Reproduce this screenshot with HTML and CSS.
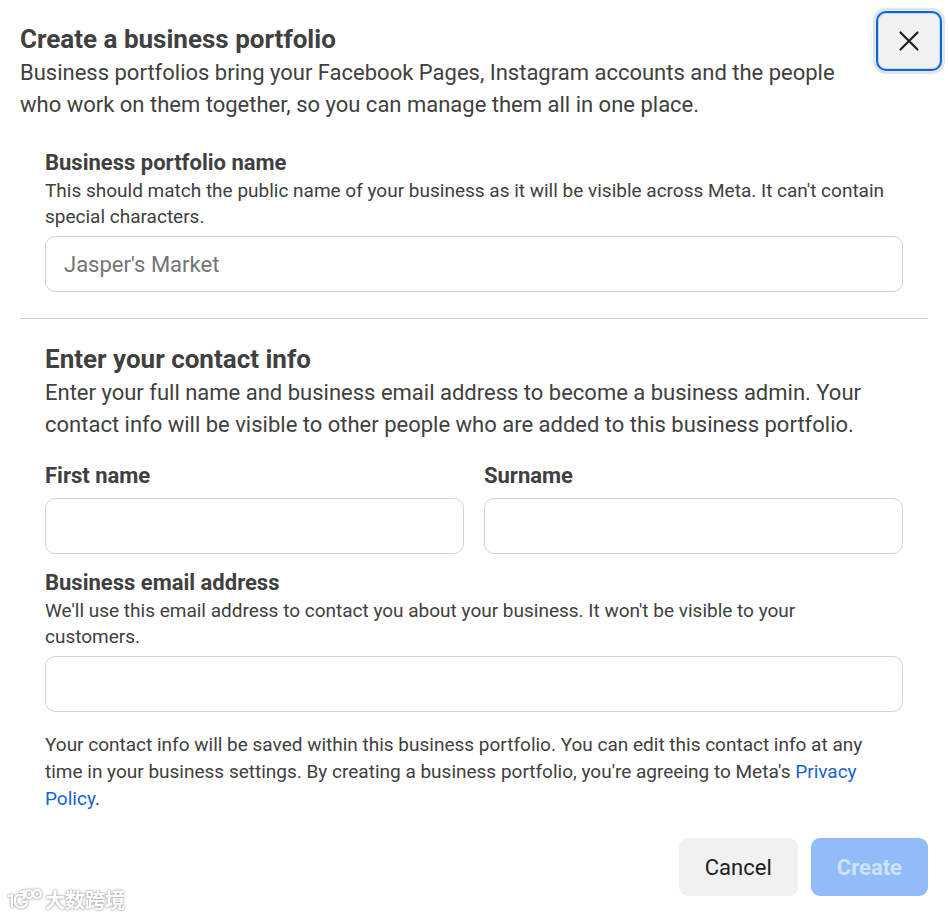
FILE: index.html
```html
<!DOCTYPE html>
<html lang="en">
<head>
<meta charset="utf-8">
<meta name="viewport" content="width=device-width, initial-scale=1">
<title>Create a business portfolio</title>
<link rel="stylesheet" href="styles.css">
</head>
<body>
<main class="dialog">
  <header class="header">
    <div class="intro">
      <h1 class="title">Create a business portfolio</h1>
      <p class="lead">Business portfolios bring your Facebook Pages, Instagram accounts and the people who work on them together, so you can manage them all in one place.</p>
    </div>
    <button class="close" type="button" aria-label="Close">
      <svg width="22" height="22" viewBox="0 0 22 22" fill="none" stroke="#1c1e21" stroke-width="2.2" stroke-linecap="round"><path d="M2.500 2.500 19.500 19.500M19.500 2.500 2.500 19.500"/></svg>
    </button>
  </header>
  <form class="form">
    <section class="section">
      <label class="label" for="portfolio">Business portfolio name</label>
      <p class="help">This should match the public name of your business as it will be visible across Meta. It can't contain special characters.</p>
      <input class="input" id="portfolio" type="text" placeholder="Jasper's Market">
    </section>
    <hr class="divider">
    <section class="section">
      <h2 class="title">Enter your contact info</h2>
      <p class="lead">Enter your full name and business email address to become a business admin. Your contact info will be visible to other people who are added to this business portfolio.</p>
      <div class="names">
        <div class="field">
          <label class="label" for="first">First name</label>
          <input class="input" id="first" type="text">
        </div>
        <div class="field">
          <label class="label" for="surname">Surname</label>
          <input class="input" id="surname" type="text">
        </div>
      </div>
      <label class="label" for="email">Business email address</label>
      <p class="help">We'll use this email address to contact you about your business. It won't be visible to your customers.</p>
      <input class="input" id="email" type="email">
      <p class="note">Your contact info will be saved within this business portfolio. You can edit this contact info at any time in your business settings. By creating a business portfolio, you're agreeing to Meta's <a class="link" href="#">Privacy Policy</a>.</p>
    </section>
    <footer class="actions">
      <button class="button" type="button">Cancel</button>
      <button class="button primary" type="submit" disabled>Create</button>
    </footer>
  </form>
  <div class="watermark">
    <svg width="36" height="26" viewBox="0 0 36 26" fill="none" stroke="#fff" stroke-width="2.2" stroke-linecap="round" stroke-linejoin="round"><path d="M2 9 5 8V20M15 8C8 7 8 11 8 14A6 6 0 0 0 20 15H16M14 5 17 4V11"/><ellipse cx="22" cy="7" rx="3.500" ry="4"/><ellipse cx="30" cy="7" rx="4" ry="4"/></svg>
    <span>大数跨境</span>
  </div>
</main>
</body>
</html>
```

FILE: styles.css
```css
* {
  box-sizing: border-box;
}

body {
  margin: 0;
  background: #fff;
  color: #404040;
  font-family: Roboto, "Liberation Sans", sans-serif;
}

h1, h2, p {
  margin: 0;
}

.dialog {
  position: relative;
  padding: 23px 20px 22px;
}

.header {
  display: flex;
  align-items: flex-start;
  justify-content: space-between;
  gap: 12px;
}

.title {
  margin-bottom: 2px;
  font-size: 26px;
  line-height: 32px;
  font-weight: 700;
}

.lead {
  font-size: 22px;
  line-height: 32px;
}

.close {
  display: flex;
  flex: none;
  align-items: center;
  justify-content: center;
  width: 66px;
  height: 60px;
  margin: -12px -14px 0 0;
  padding: 0;
  border: 2px solid #1763cf;
  border-radius: 10px;
  background: #f1f1f1;
  box-shadow: 0 0 0 3px #e2e5e9, inset 0 0 0 1px #b9d7fb;
}

.section {
  padding: 0 25px;
}

.form {
  margin-top: 28px;
}

.label {
  display: block;
  font-size: 22px;
  line-height: 28px;
  font-weight: 700;
}

.help {
  margin: 1px 0 6px;
  padding-right: 10px;
  font-size: 19px;
  line-height: 26px;
}

.input {
  display: block;
  width: 100%;
  height: 56px;
  padding: 0 18px;
  border: 1px solid #d3d5d7;
  border-radius: 10px;
  background: #fff;
  color: #404040;
  font: 22px Roboto, "Liberation Sans", sans-serif;
}

.input::placeholder {
  color: #757575;
  opacity: 1;
}

.divider {
  height: 1px;
  margin: 26px 0 24px;
  border: 0;
  background: #d3d5d7;
}

.names {
  display: grid;
  grid-template-columns: 1fr 1fr;
  gap: 20px;
  margin: 21px 0 15px;
}

.field .label {
  margin-bottom: 8px;
}

.note {
  margin-top: 19px;
  font-size: 19px;
  line-height: 27px;
}

.link {
  color: #1763cf;
  text-decoration: none;
}

.actions {
  display: flex;
  justify-content: flex-end;
  gap: 13px;
  margin-top: 26px;
}

.button {
  height: 58px;
  padding: 0 26px;
  border: 0;
  border-radius: 9px;
  background: #f1f1f1;
  color: #1c1e21;
  font: 22px Roboto, "Liberation Sans", sans-serif;
}

.primary {
  background: #91bcf8;
  color: #cde1fc;
  font-weight: 700;
}

.watermark {
  position: absolute;
  bottom: 4px;
  left: 7px;
  display: flex;
  align-items: center;
  gap: 2px;
  color: #fff;
  font: 700 20px/28px "Noto Sans CJK SC", sans-serif;
  filter: drop-shadow(0 0 1px #aaa) drop-shadow(0 0 1px #ccc);
}
```
